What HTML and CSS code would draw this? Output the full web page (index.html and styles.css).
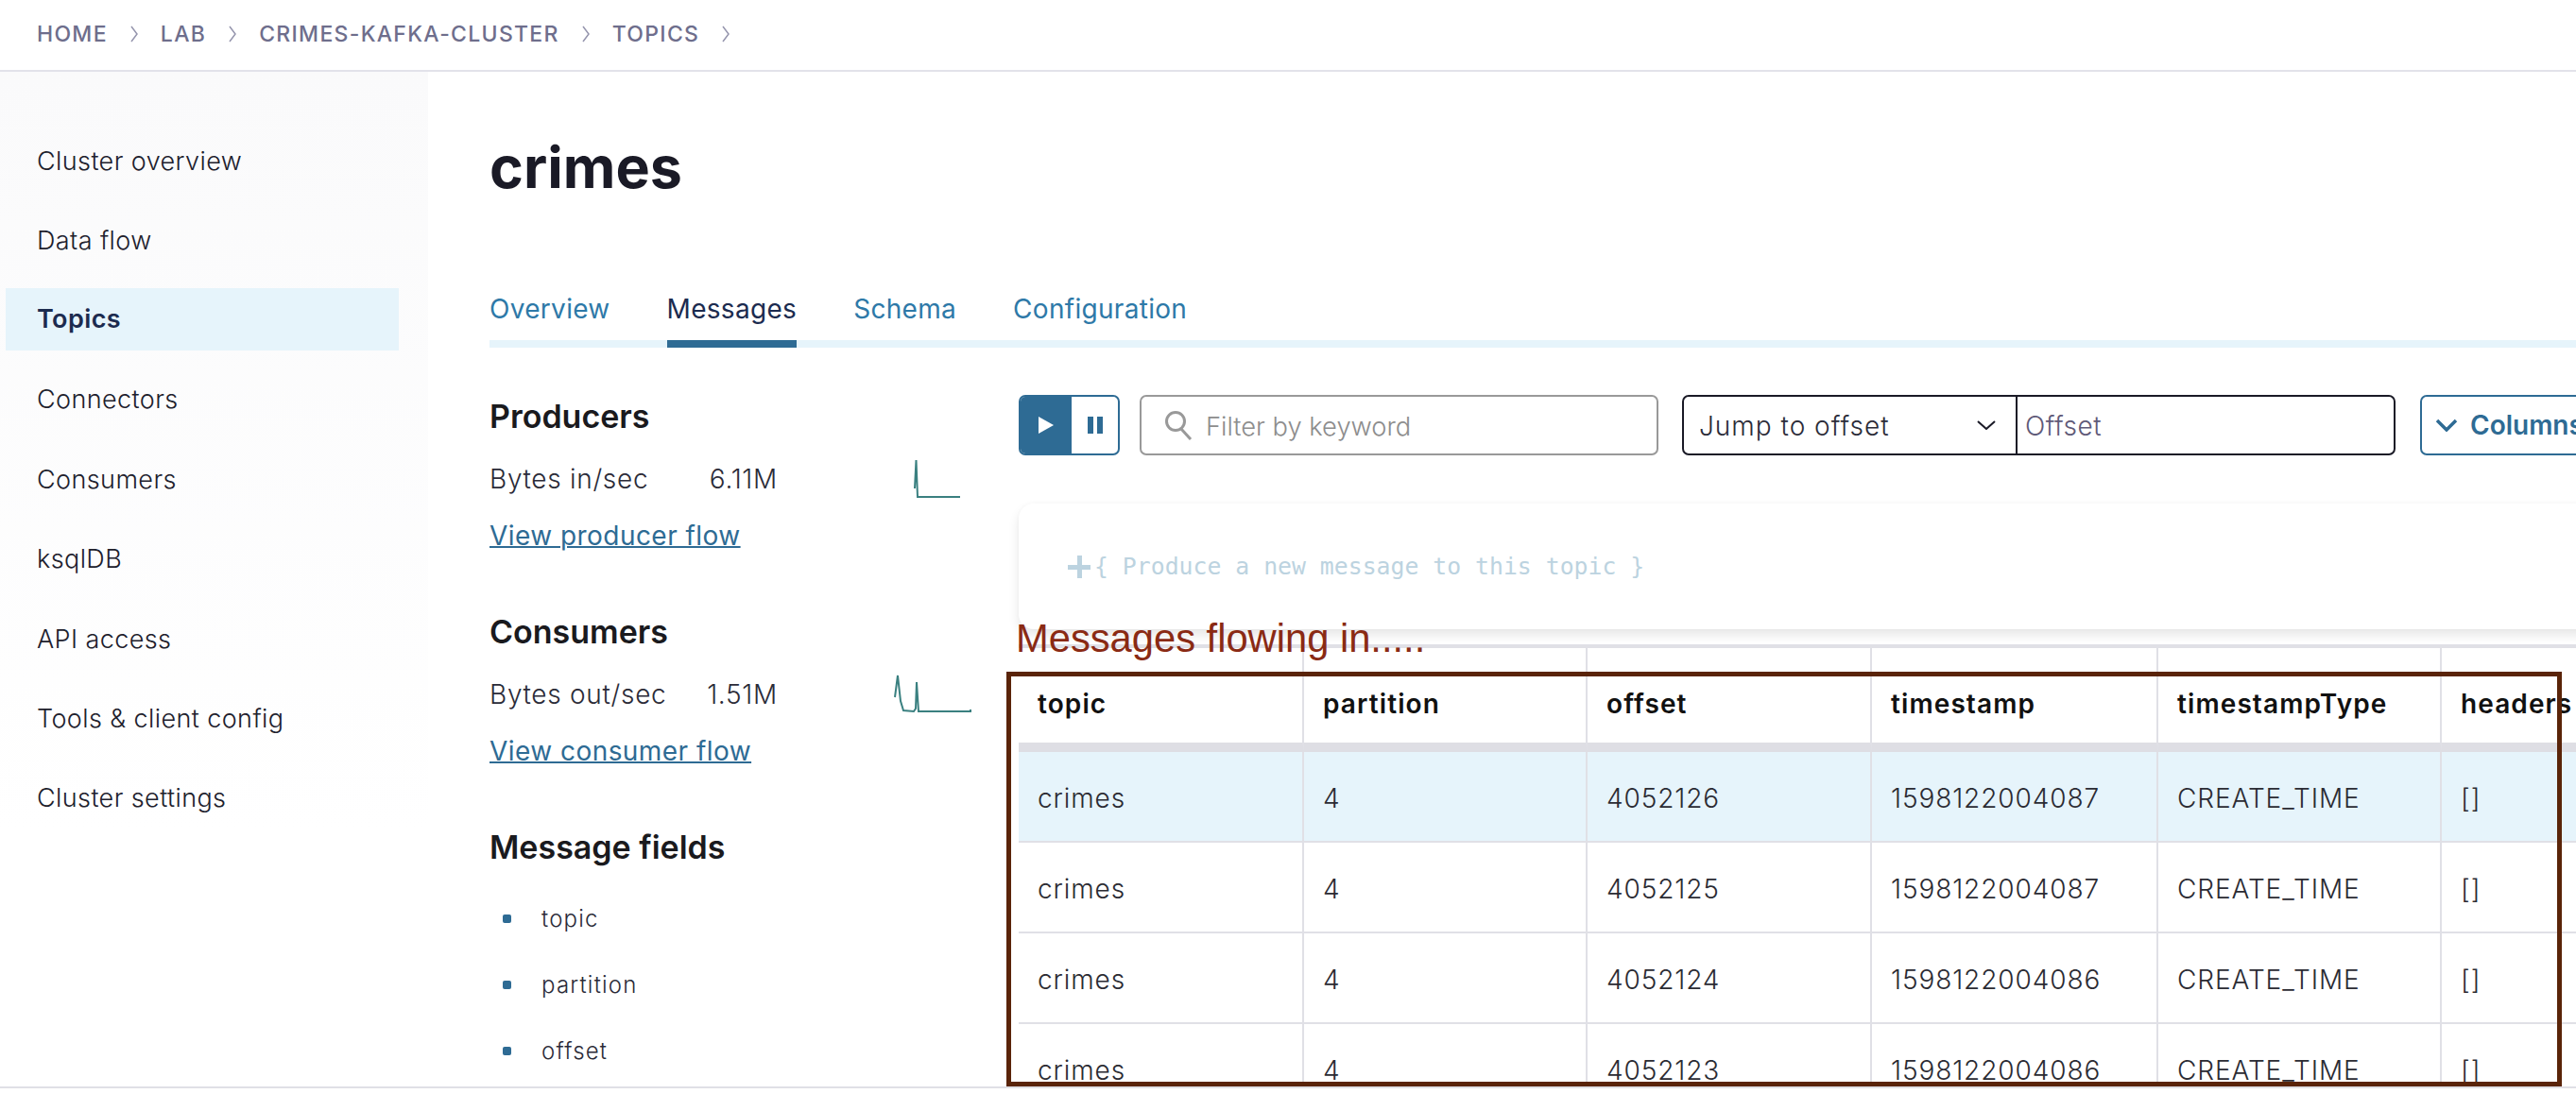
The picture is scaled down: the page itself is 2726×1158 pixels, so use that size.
FILE: index.html
```html
<!DOCTYPE html>
<html lang="en">
<head>
    <meta charset="UTF-8">
    <meta name="viewport" content="width=device-width, initial-scale=1.0">
    <title>crimes - Topics</title>
    <link rel="stylesheet" href="styles.css">
</head>
<body>
    <div class="page">
        <nav class="breadcrumb">
            <a>Home</a>
            <svg class="crumb-sep" viewBox="0 0 10 18"><path d="M2 1l6 8-6 8"/></svg>
            <a>Lab</a>
            <svg class="crumb-sep" viewBox="0 0 10 18"><path d="M2 1l6 8-6 8"/></svg>
            <a>crimes-kafka-cluster</a>
            <svg class="crumb-sep" viewBox="0 0 10 18"><path d="M2 1l6 8-6 8"/></svg>
            <a>Topics</a>
            <svg class="crumb-sep" viewBox="0 0 10 18"><path d="M2 1l6 8-6 8"/></svg>
        </nav>

        <div class="layout">
            <aside class="sidebar">
                <a class="side-item">Cluster overview</a>
                <a class="side-item">Data flow</a>
                <a class="side-item active">Topics</a>
                <a class="side-item">Connectors</a>
                <a class="side-item">Consumers</a>
                <a class="side-item">ksqlDB</a>
                <a class="side-item">API access</a>
                <a class="side-item">Tools &amp; client config</a>
                <a class="side-item">Cluster settings</a>
            </aside>

            <main class="main">
                <h1 class="title">crimes</h1>

                <div class="tabs">
                    <a class="tab">Overview</a>
                    <a class="tab active">Messages</a>
                    <a class="tab">Schema</a>
                    <a class="tab">Configuration</a>
                </div>

                <div class="content">
                    <section class="info">
                        <h3>Producers</h3>
                        <div class="stat">
                            <span class="stat-label">Bytes in/sec</span>
                            <span class="stat-value">6.11M</span>
                            <svg class="spark" viewBox="0 0 84 44"><path d="M23 32L24.500 2L26 41H71"/></svg>
                        </div>
                        <a class="flow-link">View producer flow</a>

                        <h3 class="next">Consumers</h3>
                        <div class="stat">
                            <span class="stat-label">Bytes out/sec</span>
                            <span class="stat-value">1.51M</span>
                            <svg class="spark" viewBox="0 0 84 44"><path d="M2 25L5 2L8 29L11 39L22 40L24 37L25 9L27 40H82V38"/></svg>
                        </div>
                        <a class="flow-link">View consumer flow</a>

                        <h3 class="next">Message fields</h3>
                        <ul class="fields">
                            <li>topic</li>
                            <li>partition</li>
                            <li>offset</li>
                        </ul>
                    </section>

                    <section class="messages">
                        <div class="toolbar">
                            <div class="play-toggle">
                                <span class="play-btn"><svg viewBox="0 0 16 18" width="16" height="18"><path d="M0 0l16 9-16 9z"/></svg></span>
                                <span class="pause-btn"><svg viewBox="0 0 16 18" width="16" height="18"><path d="M0 0h6v18H0zM10 0h6v18h-6z"/></svg></span>
                            </div>
                            <div class="filter">
                                <svg viewBox="0 0 32 32" width="32" height="32"><circle cx="13" cy="12" r="9.500"/><path d="M19 20l10 11"/></svg>
                                <span>Filter by keyword</span>
                            </div>
                            <div class="jump">
                                <div class="jump-select">
                                    <span>Jump to offset</span>
                                    <svg viewBox="0 0 20 10" width="20" height="10"><path d="M1 1l9 8 9-8"/></svg>
                                </div>
                                <div class="jump-input">Offset</div>
                            </div>
                            <div class="columns-btn">
                                <svg viewBox="0 0 24 14" width="24" height="14"><path d="M2 2l10 10L22 2"/></svg>
                                <span>Columns</span>
                            </div>
                        </div>

                        <div class="produce">
                            <svg viewBox="0 0 24 24" width="24" height="24"><path d="M10 0h5v10h9v5h-9v9h-5v-9H0v-5h10z"/></svg>
                            <span>{ Produce a new message to this topic }</span>
                        </div>

                        <table class="msg-table">
                            <thead>
                                <tr><th>topic</th><th>partition</th><th>offset</th><th>timestamp</th><th>timestampType</th><th>headers</th></tr>
                            </thead>
                            <tbody>
                                <tr class="fresh"><td>crimes</td><td>4</td><td>4052126</td><td>1598122004087</td><td>CREATE_TIME</td><td>[]</td></tr>
                                <tr><td>crimes</td><td>4</td><td>4052125</td><td>1598122004087</td><td>CREATE_TIME</td><td>[]</td></tr>
                                <tr><td>crimes</td><td>4</td><td>4052124</td><td>1598122004086</td><td>CREATE_TIME</td><td>[]</td></tr>
                                <tr><td>crimes</td><td>4</td><td>4052123</td><td>1598122004086</td><td>CREATE_TIME</td><td>[]</td></tr>
                            </tbody>
                        </table>
                    </section>
                </div>
            </main>
        </div>

        <!-- annotation drawn on top of the screenshot -->
        <div class="note">Messages flowing in.....</div>
        <div class="note-box"></div>
    </div>
</body>
</html>
```

FILE: styles.css
```css
* {
    box-sizing: border-box;
}
html, body {
    margin: 0;
    height: 1158px;
    overflow: hidden;
    background-color: #fff;
}
body {
    font-family: Inter, "Noto Sans", sans-serif;
    color: #2b2b38;
}
.page {
    position: relative;
    height: 1152px;
    border-bottom: 2px solid #e0e0e6;
    overflow: hidden;
}

/* breadcrumb */
.breadcrumb {
    display: flex;
    align-items: center;
    gap: 23px;
    height: 76px;
    padding: 0 0 2px 39px;
    border-bottom: 2px solid #e2e2ea;
    font-size: 23px;
    font-weight: 500;
    letter-spacing: 1.3px;
    text-transform: uppercase;
    color: #6e6e8c;
}
.crumb-sep {
    width: 10px;
    height: 18px;
}
.crumb-sep path {
    fill: none;
    stroke: #9595ad;
    stroke-width: 1.500;
}

.layout {
    display: flex;
    height: 1074px;
}

/* sidebar */
.sidebar {
    width: 453px;
    flex-shrink: 0;
    padding: 52px 31px 0 6px;
    background: linear-gradient(#fafafb, #fff 75%);
}
.side-item {
    display: flex;
    align-items: center;
    height: 84.400px;
    padding-left: 33px;
    font-size: 27px;
    letter-spacing: 0.4px;
    font-weight: 300;
    color: #20202c;
}
.side-item.active {
    height: 66px;
    margin: 8px 0 10px;
    background-color: #e6f4fb;
    font-weight: 600;
    color: #1c2b4f;
}

/* main */
.main {
    flex: 1;
    min-width: 0;
    padding-left: 65px;
}
.title {
    margin: 0;
    padding-top: 63px;
    height: 170px;
    font-size: 61px;
    line-height: 76px;
    font-weight: 700;
    color: #1a1a26;
}
.tabs {
    display: flex;
    gap: 60px;
    height: 122px;
    align-items: flex-end;
    border-bottom: 8px solid #e6f4fb;
}
.tab {
    height: 57px;
    margin-bottom: -8px;
    border-bottom: 8px solid transparent;
    font-size: 28px;
    line-height: 32px;
    letter-spacing: 0.3px;
    color: #2e79a8;
}
.tab.active {
    border-bottom-color: #2e6b94;
    color: #1c2b4f;
}

.content {
    display: flex;
}

/* left info column */
.info {
    width: 560px;
    flex-shrink: 0;
    padding-top: 53px;
}
.info h3 {
    margin: 0 0 24px;
    font-size: 34px;
    line-height: 40px;
    font-weight: 600;
    color: #1a1a1e;
}
.info h3.next {
    margin-top: 66px;
}
.stat {
    display: flex;
    align-items: center;
    height: 44px;
    font-size: 28px;
    font-weight: 300;
    letter-spacing: 0.7px;
}
.stat-label {
    width: 200px;
}
.stat-value {
    width: 105px;
    text-align: right;
}
.spark {
    width: 84px;
    height: 44px;
    margin-left: 122px;
}
.spark path {
    fill: none;
    stroke: #3a8080;
    stroke-width: 2;
}
.flow-link {
    display: block;
    margin-top: 22px;
    font-size: 28px;
    line-height: 32px;
    letter-spacing: 0.45px;
    color: #2e6b94;
    text-decoration: underline;
    text-decoration-thickness: 2px;
}
.fields {
    list-style: none;
    margin: -4px 0 0;
    padding: 0 0 0 14px;
}
.fields li {
    display: flex;
    align-items: center;
    gap: 32px;
    height: 70px;
    font-size: 24px;
    font-weight: 300;
    letter-spacing: 1.2px;
}
.fields li::before {
    content: "";
    width: 9px;
    height: 9px;
    border-radius: 2px;
    background-color: #2e6b94;
}

/* toolbar */
.messages {
    flex: 1;
    min-width: 0;
    padding-top: 50px;
}
.toolbar {
    display: flex;
    height: 64px;
}
.play-toggle {
    display: flex;
    width: 107px;
    flex-shrink: 0;
    border: 2px solid #2e6b94;
    border-radius: 7px;
    overflow: hidden;
}
.play-btn, .pause-btn {
    display: flex;
    align-items: center;
    justify-content: center;
}
.play-btn {
    width: 54px;
    background-color: #2e6b94;
    fill: #fff;
}
.pause-btn {
    flex: 1;
    fill: #2e6b94;
}
.filter {
    display: flex;
    align-items: center;
    gap: 13px;
    width: 549px;
    flex-shrink: 0;
    margin-left: 21px;
    padding-left: 23px;
    border: 2px solid #999;
    border-radius: 7px;
    font-size: 27.300px;
    font-weight: 300;
    color: #8d8d8d;
}
.filter span {
    padding-top: 3px;
}
.filter svg {
    fill: none;
    stroke: #999;
    stroke-width: 3;
}
.jump {
    display: flex;
    width: 755px;
    flex-shrink: 0;
    margin-left: 25px;
    border: 2px solid #1a1a26;
    border-radius: 7px;
    font-size: 28px;
    letter-spacing: 1px;
}
.jump-select {
    display: flex;
    align-items: center;
    justify-content: space-between;
    width: 353px;
    padding: 0 21px 0 16px;
    border-right: 2px solid #1a1a26;
    font-weight: 300;
}
.jump-select span {
    padding-top: 2px;
}
.jump-select svg {
    fill: none;
    stroke: #1a1a26;
    stroke-width: 2;
}
.jump-input {
    display: flex;
    align-items: center;
    padding: 2px 0 0 8px;
    font-weight: 300;
    letter-spacing: 0.5px;
    color: #5f5a78;
}
.columns-btn {
    display: flex;
    align-items: center;
    gap: 13px;
    width: 240px;
    flex-shrink: 0;
    margin-left: 26px;
    padding-left: 14px;
    border: 2px solid #2e6b94;
    border-radius: 7px;
    font-size: 28px;
    font-weight: 600;
    color: #2e6b94;
}
.columns-btn svg {
    fill: none;
    stroke: #2e6b94;
    stroke-width: 3.500;
}

/* produce card */
.produce {
    display: flex;
    align-items: center;
    gap: 4px;
    height: 133px;
    margin-top: 51px;
    margin-right: -40px;
    padding-left: 52px;
    border-radius: 16px 0 0 16px;
    box-shadow: 0 6px 12px rgba(0, 0, 0, 0.1), 0 -1px 5px rgba(0, 0, 0, 0.02);
    font-family: "DejaVu Sans Mono", monospace;
    font-size: 24.800px;
    color: #bcd3e0;
    fill: #bcd3e0;
}

/* table */
.msg-table {
    width: 1806px;
    margin-top: 16px;
    table-layout: fixed;
    border-collapse: separate;
    border-spacing: 0;
    border-top: 4px solid #e0e0e6;
    font-size: 28px;
}
.msg-table th, .msg-table td {
    padding: 0 0 0 20px;
    border-right: 2px solid #e0e0e6;
    text-align: left;
}
.msg-table th:nth-child(1) { width: 302px; }
.msg-table th:nth-child(2) { width: 300px; }
.msg-table th:nth-child(3) { width: 301px; }
.msg-table th:nth-child(4) { width: 303px; }
.msg-table th:nth-child(5) { width: 300px; }
.msg-table th:nth-child(6) { width: 300px; }
.msg-table th {
    height: 110px;
    padding-top: 18px;
    border-bottom: 10px solid #dedee4;
    font-weight: 600;
    letter-spacing: 1.1px;
    color: #111;
}
.msg-table td {
    height: 96px;
    padding-top: 3px;
    border-bottom: 2px solid #e0e0e6;
    font-weight: 300;
    letter-spacing: 0.9px;
    color: #2b2b33;
}
.msg-table tr.fresh td {
    background-color: #e6f4fb;
}

/* annotation */
.note {
    position: absolute;
    left: 1075px;
    top: 651px;
    font-family: "Liberation Sans", Arial, sans-serif;
    font-size: 41.700px;
    line-height: 50px;
    color: #8a2a14;
}
.note-box {
    position: absolute;
    left: 1065px;
    top: 711px;
    width: 1646px;
    height: 439px;
    border: 5px solid #5a2409;
}
```
